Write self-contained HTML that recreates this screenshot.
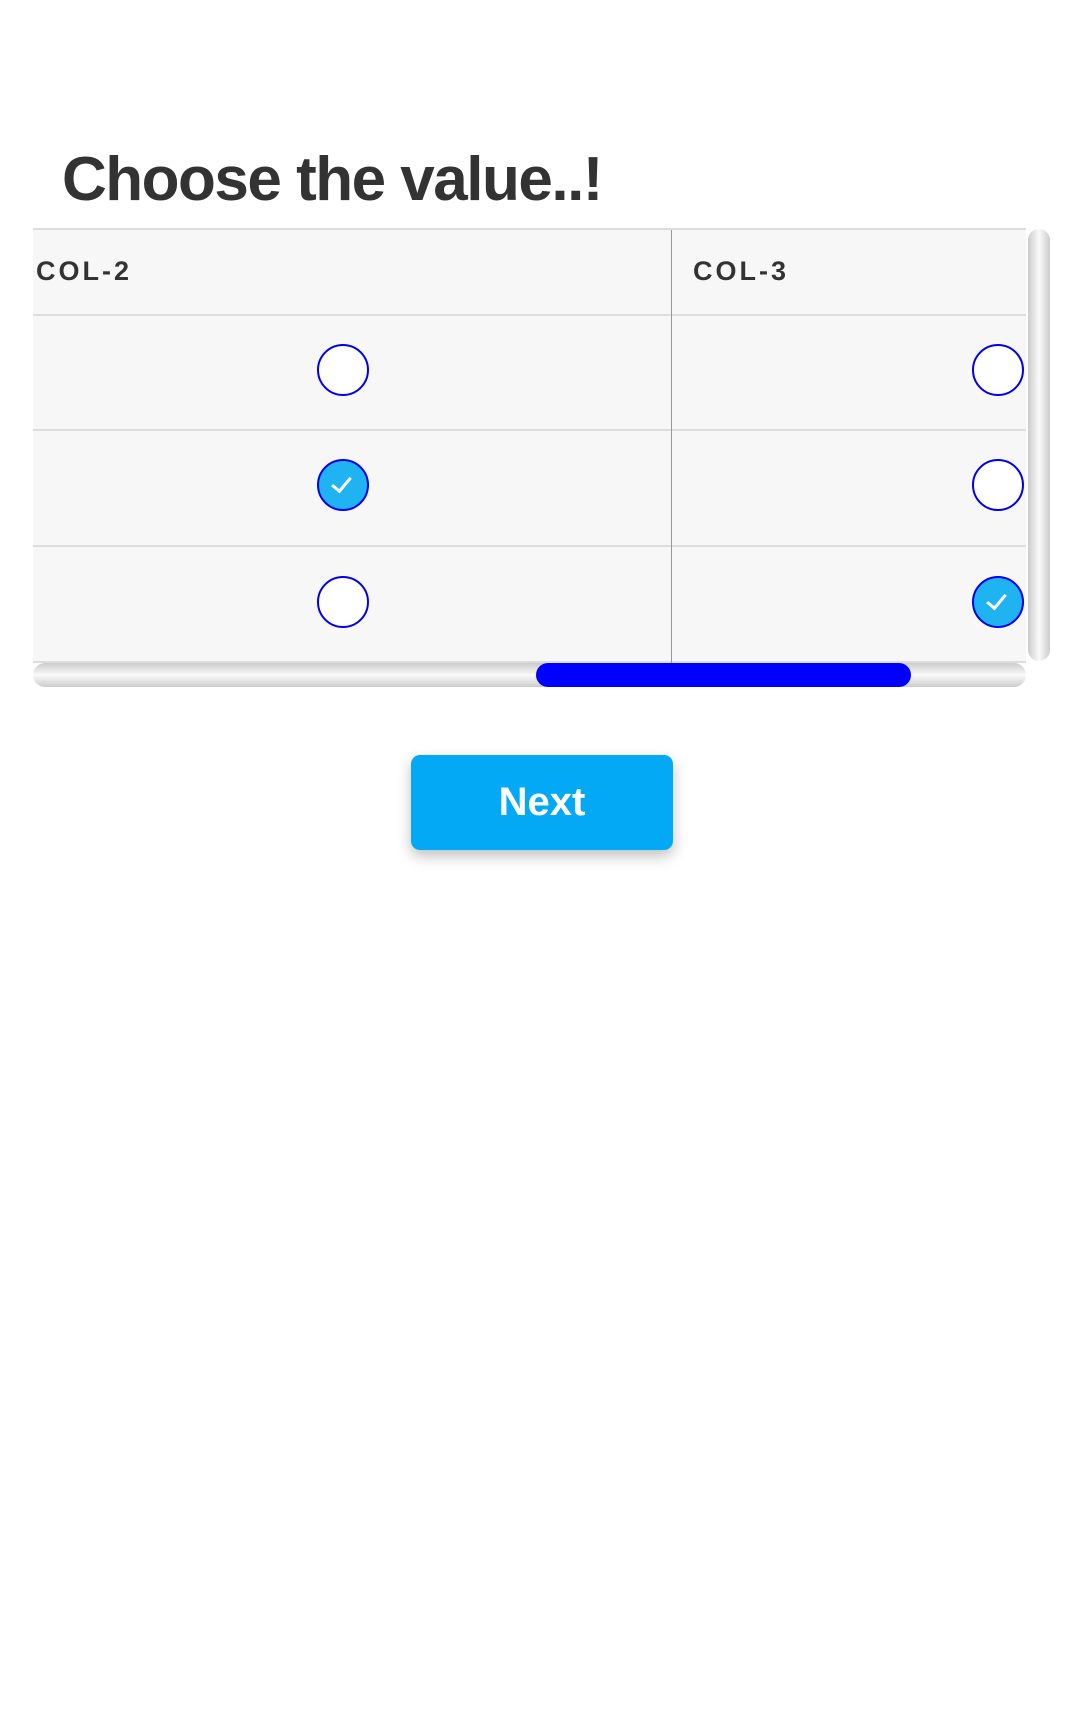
<!DOCTYPE html>
<html><head><meta charset="utf-8"><style>
html,body{margin:0;padding:0;background:#fff;width:1080px;height:1731px;overflow:hidden;font-family:"Liberation Sans",sans-serif}
.t{position:absolute;left:62px;top:144px;font-size:62px;font-weight:bold;color:#333;letter-spacing:-1.5px}
.tbl{position:absolute;left:33px;top:228px;width:993px;height:433px;background:#f7f7f7;border-top:2px solid #ddd;overflow:hidden}
.h{position:absolute;left:0;width:993px;height:2px;background:#ddd}
.v{position:absolute;left:638px;top:0;width:1px;height:433px;background:#999}
.hd{position:absolute;top:256px;font-size:27px;font-weight:bold;color:#333;letter-spacing:3px}
.r{position:absolute;width:52px;height:52px;border:2px solid #0000ee;border-radius:50%;background:#fff;box-sizing:border-box}
.r.c{background:#1fb3f2}
.r.c::after{content:"";position:absolute;left:17px;top:12px;width:8px;height:16px;border:solid #fff;border-width:0 3px 3px 0;transform:rotate(40deg)}
.vs{position:absolute;left:1028px;top:229px;width:22px;height:432px;border-radius:11px;background:linear-gradient(90deg,#ccc,#fafafa 50%,#ccc)}
.hs{position:absolute;left:33px;top:663px;width:993px;height:24px;border-radius:12px;background:linear-gradient(#ccc,#fafafa 50%,#ccc)}
.th{position:absolute;left:536px;top:663px;width:375px;height:24px;border-radius:12px;background:#0000ff}
.b{position:absolute;left:411px;top:755px;width:262px;height:95px;border-radius:9px;background:#03a9f4;box-shadow:0 6px 14px rgba(0,0,0,.25);color:#fff;font-weight:bold;font-size:40px;text-align:center;line-height:95px}
</style></head><body>
<div class="t">Choose the value..!</div>
<div class="tbl">
<div class="h" style="top:84px"></div>
<div class="h" style="top:199px"></div>
<div class="h" style="top:315px"></div>
<div class="h" style="top:431px"></div>
<div class="v"></div>
</div>
<div class="hd" style="left:36px">COL-2</div>
<div class="hd" style="left:693px">COL-3</div>
<div class="r" style="left:317px;top:344px"></div>
<div class="r c" style="left:317px;top:459px"></div>
<div class="r" style="left:317px;top:576px"></div>
<div style="position:absolute;left:33px;top:229px;width:993px;height:432px;overflow:hidden">
<div class="r" style="left:939px;top:115px"></div>
<div class="r" style="left:939px;top:230px"></div>
<div class="r c" style="left:939px;top:347px"></div>
</div>
<div class="vs"></div>
<div class="hs"></div>
<div class="th"></div>
<div class="b">Next</div>
</body></html>
